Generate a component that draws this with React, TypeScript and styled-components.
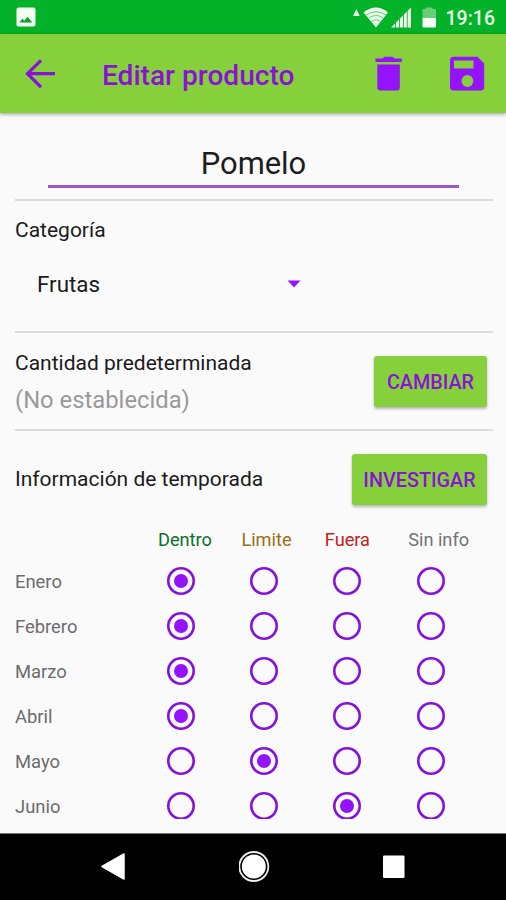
import React from "react";
import styled, { createGlobalStyle } from "styled-components";

const PURPLE = "#9413fa";
const PURPLE_TEXT = "#8a12d6";
const LIME = "#86d13b";

const GlobalStyle = createGlobalStyle`
  * { box-sizing: border-box; }
  body { margin: 0; background: #fafafa; font-family: Roboto, "Noto Sans", sans-serif; }
  svg { display: block; flex: none; }
`;

const Screen = styled.div`
  width: 506px;
  height: 900px;
  display: flex;
  flex-direction: column;
  overflow: hidden;
  background: #fafafa;
`;

const StatusBar = styled.div`
  height: 34px;
  flex: none;
  display: flex;
  align-items: center;
  justify-content: space-between;
  padding: 0 11px 0 16px;
  background: #04b22a;
`;

const StatusIcons = styled.div`
  display: flex;
  align-items: center;
`;

const Clock = styled.span`
  margin-left: 10px;
  font-size: 19.5px;
  font-weight: 500;
  line-height: 34px;
  padding-top: 3px;
  color: #e9fbe6;
`;

const AppBar = styled.header`
  height: 79px;
  flex: none;
  display: flex;
  align-items: center;
  padding: 0 21px 0 23px;
  background: ${LIME};
  box-shadow: 0 1px 4px rgba(0, 0, 0, 0.4);
`;

const Title = styled.h1`
  flex: 1;
  margin: 5px 0 0 45px;
  font-size: 28.1px;
  font-weight: 500;
  line-height: 32px;
  white-space: nowrap;
  color: ${PURPLE_TEXT};
`;

const AppActions = styled.div`
  display: flex;
  align-items: center;
  gap: 48px;
`;

const Content = styled.main`
  height: 706px;
  flex: none;
  display: flex;
  flex-direction: column;
  overflow: hidden;
  padding: 0 13.5px 0 15px;
`;

const NameField = styled.div`
  width: 411px;
  height: 75px;
  flex: none;
  margin-left: 33px;
  padding-top: 33px;
  border-bottom: 3px solid #9d57c3;
  font-size: 30.9px;
  line-height: 36px;
  text-align: center;
  color: #1c1c1c;
`;

const Divider = styled.div<{ $top?: number }>`
  height: 2px;
  flex: none;
  margin-top: ${({ $top = 0 }) => $top}px;
  background: #dcdcdc;
`;

const CategorySection = styled.section`
  height: 130px;
  flex: none;
  padding-top: 15px;
`;

const Label = styled.div`
  font-size: 21px;
  line-height: 28px;
  color: #1b1b1b;
`;

const Dropdown = styled.div`
  width: 264px;
  margin: 26px 0 0 22px;
  display: flex;
  align-items: center;
  justify-content: space-between;
  font-size: 22.4px;
  line-height: 28px;
  color: #1b1b1b;
`;

const SettingRow = styled.section`
  height: 96px;
  flex: none;
  display: flex;
  align-items: center;
  justify-content: space-between;
  padding-right: 5.5px;
`;

const QuantityText = styled.div`
  padding-top: 2px;
`;

const Hint = styled.div`
  margin-top: 8px;
  font-size: 23.8px;
  line-height: 30px;
  color: #999;
`;

const Button = styled.button<{ $width: number }>`
  width: ${({ $width }) => $width}px;
  height: 51px;
  padding: 2px 0 0;
  border: 0;
  border-radius: 3px;
  background: ${LIME};
  box-shadow: 0 1.5px 3px rgba(0, 0, 0, 0.28);
  font-family: inherit;
  font-size: 19.8px;
  font-weight: 500;
  color: ${PURPLE_TEXT};
`;

const SeasonGrid = styled.div`
  display: grid;
  grid-template-columns: 143px repeat(4, 83.4px);
  grid-template-rows: 31.7px;
  grid-auto-rows: 45px;
  align-items: center;
`;

const ColumnTitle = styled.div<{ $color: string }>`
  align-self: start;
  margin-top: 1px;
  font-size: 18.2px;
  line-height: 24px;
  white-space: nowrap;
  color: ${({ $color }) => $color};
`;

const Month = styled.div`
  font-size: 18.4px;
  line-height: 24px;
  padding-top: 1px;
  color: #6c6c6c;
`;

const Radio = styled.div`
  width: 28px;
  height: 28px;
  margin-left: 8.5px;
  display: grid;
  place-items: center;
  border-radius: 50%;
  box-shadow: inset 0 0 0 2.6px #8512dc;
`;

const RadioDot = styled.span`
  width: 14px;
  height: 14px;
  border-radius: 50%;
  background: ${PURPLE};
`;

const NavBar = styled.nav`
  height: 67px;
  flex: none;
  margin-top: auto;
  display: flex;
  align-items: center;
  justify-content: space-between;
  padding: 0 101px 0 100px;
  border-top: 1px solid #777;
  background: #000;
`;

const columns = [
  { name: "Dentro", color: "#0c702c" },
  { name: "Limite", color: "#a06c14" },
  { name: "Fuera", color: "#c3201f" },
  { name: "Sin info", color: "#737373" },
];

const months = [
  { name: "Enero", value: 0 },
  { name: "Febrero", value: 0 },
  { name: "Marzo", value: 0 },
  { name: "Abril", value: 0 },
  { name: "Mayo", value: 1 },
  { name: "Junio", value: 2 },
];

export default function App() {
  return (
    <>
      <GlobalStyle />
      <Screen>
        <StatusBar>
          <svg width="20" height="20" viewBox="0 0 20 20">
            <rect x="0.5" y="0.5" width="19" height="19" rx="2" fill="#f3fff3" />
            <path d="M3.5 15.5 6.5 11.5 8.3 13.8 11.5 9.8 16.3 15.5Z" fill="#129b34" />
          </svg>
          <StatusIcons>
            <svg width="84" height="24" viewBox="352 5 84 24">
              <path d="M353 16 356.3 9 359.7 16Z" fill="#eaffea" />
              <path d="M363.5 12.5Q376 2.5 388 12.5L376 27.5Z" fill="#eaffea" />
              <path d="M366 15Q376 8.5 386 15M368.5 18Q376 13 383.5 18M371.5 21.5Q376 18 380.5 21.5" fill="none" stroke="#2fb64a" strokeWidth="0.7" />
              <path d="M391 27.5 411 7.5V27.5Z" fill="#eaffea" />
              <path d="M395.5 20V28M399.5 16V28M403.5 12V28M407.3 8V28" stroke="#1db03d" strokeWidth="0.9" />
              <path d="M425.5 7.5H432.5V9H436V18H422.5V9H425.5Z" fill="#69ce78" />
              <path d="M422.5 18H436V26Q436 27.5 434.5 27.5H424Q422.5 27.5 422.5 26Z" fill="#f8fff8" />
            </svg>
            <Clock>19:16</Clock>
          </StatusIcons>
        </StatusBar>
        <AppBar>
          <svg width="34" height="32" viewBox="23 58 34 32">
            <path d="M55 73.7H28M41 60.3 27.5 73.7 41 87.1" fill="none" stroke={PURPLE_TEXT} strokeWidth="3.3" />
          </svg>
          <Title>Editar producto</Title>
          <AppActions>
            <svg width="27" height="36" viewBox="375 56 27 36">
              <path d="M375.5 58.5H382.5L384.5 56.7H392.5L394.5 58.5H401.8V62H375.5ZM377.3 64.5H399.8V87.5Q399.8 90.5 396.8 90.5H380.3Q377.3 90.5 377.3 87.5Z" fill={PURPLE} />
            </svg>
            <svg width="35" height="36" viewBox="450 56 35 36">
              <path fillRule="evenodd" d="M453.5 56.7H477.5L484.2 63.4V87Q484.2 90.5 480.7 90.5H453.5Q450 90.5 450 87V60.2Q450 56.7 453.5 56.7ZM454 60.5V68.5H473.5V60.5ZM461.5 81A5.9 5.9 0 0 0 473.3 81A5.9 5.9 0 0 0 461.5 81Z" fill={PURPLE} />
            </svg>
          </AppActions>
        </AppBar>
        <Content>
          <NameField>Pomelo</NameField>
          <Divider $top={11} />
          <CategorySection>
            <Label>Categoría</Label>
            <Dropdown>
              Frutas
              <svg width="14" height="8" viewBox="0 0 14 8">
                <path d="M.5.5H13.5L7 7.5Z" fill={PURPLE} />
              </svg>
            </Dropdown>
          </CategorySection>
          <Divider />
          <SettingRow>
            <QuantityText>
              <Label>Cantidad predeterminada</Label>
              <Hint>(No establecida)</Hint>
            </QuantityText>
            <Button $width={113}>CAMBIAR</Button>
          </SettingRow>
          <Divider />
          <SettingRow>
            <Label>Información de temporada</Label>
            <Button $width={135}>INVESTIGAR</Button>
          </SettingRow>
          <SeasonGrid>
            <span />
            {columns.map((column) => (
              <ColumnTitle key={column.name} $color={column.color}>{column.name}</ColumnTitle>
            ))}
            {months.map((month) => (
              <React.Fragment key={month.name}>
                <Month>{month.name}</Month>
                {columns.map((column, index) => (
                  <Radio key={column.name}>{month.value === index && <RadioDot />}</Radio>
                ))}
              </React.Fragment>
            ))}
          </SeasonGrid>
        </Content>
        <NavBar>
          <svg width="26" height="32" viewBox="0 0 26 32">
            <path d="M2 15.5 24 3V28Z" fill="#fff" stroke="#fff" strokeWidth="1.5" strokeLinejoin="round" />
          </svg>
          <svg width="32" height="32" viewBox="1.2 0 32 32">
            <circle cx="16" cy="15.5" r="14.5" fill="none" stroke="#eee" strokeWidth="1.8" />
            <circle cx="16" cy="15.5" r="12" fill="#fff" />
          </svg>
          <svg width="22" height="24" viewBox="0 0 22 24">
            <rect y="0.5" width="21.5" height="22.5" rx="1.2" fill="#fff" />
          </svg>
        </NavBar>
      </Screen>
    </>
  );
}
